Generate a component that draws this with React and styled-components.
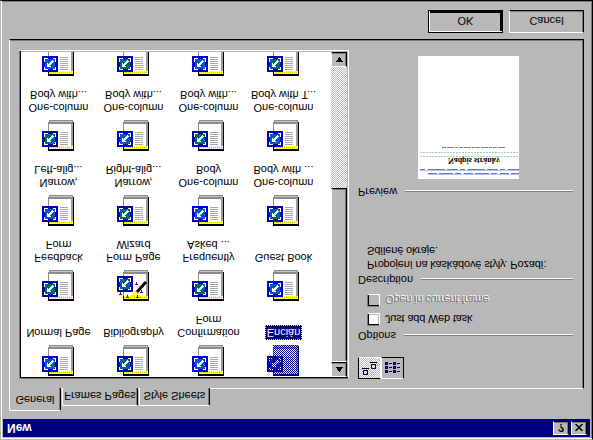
import React from "react";
import styled, { createGlobalStyle } from "styled-components";

const face = "#b8b8b8";
const shade = "#7b7b7b";
const dither = `repeating-conic-gradient(${face} 0 25%, #fff 0 50%) 0 0 / 2px 2px`;

const GlobalStyle = createGlobalStyle`
  html, body {
    margin: 0;
    background: ${face};
    overflow: hidden;
  }
  body {
    font-family: "Liberation Sans", Arial, sans-serif;
    font-size: 11px;
    color: #000;
  }
`;

const templates = [
  ["Normal Page", "Bibliography", "Confirmation\nForm", "Encián"],
  ["Feedback\nForm", "Form Page\nWizard", "Frequently\nAsked ...", "Guest Book"],
  ["Narrow,\nLeft-alig...", "Narrow,\nRight-alig...", "One-column\nBody", "One-column\nBody with ..."],
  ["One-column\nBody with...", "One-column\nBody with...", "One-column\nBody with...", "One-column\nBody with T..."],
  ["", "", "", ""],
].flat();

// the reference is mirrored top to bottom, everything inside is laid out upright
const Dialog = styled.div`
  box-sizing: border-box;
  width: 593px;
  height: 440px;
  padding: 2px;
  background: ${face};
  border: 1px solid;
  border-color: ${face} #000 #000 ${face};
  box-shadow: inset 1px 1px 0 #fff, inset -1px -1px 0 ${shade};
  transform: scaleY(-1);
  display: flex;
  flex-direction: column;
`;

const TitleBar = styled.div`
  height: 18px;
  background: #000080;
  display: flex;
  align-items: center;
  padding: 0 3px 0 4px;
  gap: 2px;
`;

const TitleText = styled.div`
  flex: 1;
  color: #fff;
  font-weight: bold;
  font-size: 12px;
`;

const CaptionButton = styled.div`
  box-sizing: border-box;
  width: 16px;
  height: 14px;
  background: ${face};
  border: 1px solid;
  border-color: #fff #000 #000 #fff;
  box-shadow: inset -1px -1px 0 ${shade};
  display: flex;
  align-items: center;
  justify-content: center;
  font-weight: bold;
  font-size: 11px;
  line-height: 1;
`;

const Content = styled.div`
  flex: 1;
  padding: 8px 6px 0;
  display: flex;
  flex-direction: column;
`;

const TabStrip = styled.div`
  display: flex;
  align-items: flex-end;
  height: 23px;
  margin-bottom: -1px;
  position: relative;
  z-index: 1;
`;

const Tab = styled.div`
  box-sizing: border-box;
  width: ${(p) => p.$width}px;
  height: ${(p) => (p.$active ? 23 : 18)}px;
  margin-right: 1px;
  padding-bottom: ${(p) => (p.$active ? 2 : 0)}px;
  background: ${face};
  border: solid;
  border-width: 1px 1px 0 1px;
  border-color: #fff #000 #fff #fff;
  border-radius: 2px 2px 0 0;
  box-shadow: inset -1px 0 0 ${shade};
  display: flex;
  align-items: center;
  justify-content: center;
`;

const TabPanel = styled.div`
  box-sizing: border-box;
  height: 350px;
  padding: 9px 9px 0;
  background: ${face};
  border: 1px solid;
  border-color: #fff #000 #000 #fff;
  box-shadow: inset -1px -1px 0 ${shade};
  display: flex;
  gap: 9px;
`;

const ListBox = styled.div`
  box-sizing: border-box;
  width: 330px;
  height: 329px;
  background: #fff;
  border: 1px solid;
  border-color: ${shade} #fff #fff ${shade};
  box-shadow: inset 1px 1px 0 #000, inset -1px -1px 0 ${face};
  padding: 2px 1px 1px 1px;
  display: flex;
`;

const ItemGrid = styled.div`
  flex: 1;
  overflow: hidden;
  display: grid;
  grid-template-columns: repeat(4, 75px);
  grid-auto-rows: 75px;
`;

const Item = styled.div`
  display: flex;
  flex-direction: column;
  align-items: center;
  gap: 5px;

  svg {
    margin-right: 1px;
  }
`;

const ItemLabel = styled.div`
  white-space: pre-line;
  text-align: center;
  line-height: 13px;
  ${(p) =>
    p.$selected &&
    `
    background: #000080;
    color: #fff;
    box-shadow: 0 0 0 1px #000;
    outline: 1px dotted #ffff00;
    padding: 0 1px;
  `}
`;

const ScrollBar = styled.div`
  flex: none;
  width: 16px;
  margin-top: -1px;
  display: flex;
  flex-direction: column;
`;

const ScrollButton = styled.div`
  box-sizing: border-box;
  height: 15px;
  flex: none;
  background: ${face};
  border: 1px solid;
  border-color: #fff #000 #000 #fff;
  box-shadow: inset -1px -1px 0 ${shade};
  display: flex;
  align-items: center;
  justify-content: center;
`;

const ScrollThumb = styled.div`
  box-sizing: border-box;
  height: 174px;
  flex: none;
  background: ${face};
  border: 1px solid;
  border-color: #fff #000 #000 #fff;
  box-shadow: inset 1px 1px 0 ${face}, inset -1px -1px 0 ${shade};
`;

const ScrollTrack = styled.div`
  flex: 1;
  background: ${dither};
`;

const SidePane = styled.div`
  width: 215px;
  display: flex;
  flex-direction: column;
`;

const ViewToggle = styled.div`
  display: flex;
  height: 22px;
  margin-bottom: 15px;
`;

const ViewButton = styled.div`
  box-sizing: border-box;
  width: 23px;
  height: 22px;
  border: 1px solid;
  border-color: ${(p) => (p.$pressed ? "#000 #fff #fff #000" : "#fff #000 #000 #fff")};
  background: ${(p) => (p.$pressed ? dither : face)};
  display: flex;
  align-items: center;
  justify-content: center;
`;

const SectionHead = styled.div`
  display: flex;
  align-items: center;
  gap: 8px;
  height: 13px;
  line-height: 13px;
  margin-top: ${(p) => p.$top || 0}px;
  &::after {
    content: "";
    flex: 1;
    height: 1px;
    background: ${shade};
    border-bottom: 1px solid #fff;
  }
`;

const CheckRow = styled.div`
  display: flex;
  align-items: center;
  gap: 5px;
  height: 13px;
  margin-left: 9px;
  margin-top: ${(p) => p.$top}px;
  letter-spacing: -0.17px;
  ${(p) => p.$disabled && `color: ${shade}; text-shadow: 1px 1px 0 #fff;`}
`;

const CheckBox = styled.div`
  box-sizing: border-box;
  width: 13px;
  height: 13px;
  background: ${(p) => (p.$disabled ? face : "#fff")};
  border: 1px solid;
  border-color: ${shade} #fff #fff ${shade};
  box-shadow: inset 1px 1px 0 #000, inset -1px -1px 0 ${face};
`;

const Description = styled.div`
  margin: 1px 0 0 9px;
  line-height: 14px;
  height: 43px;
  letter-spacing: -0.17px;
`;

const PreviewPic = styled.div`
  width: 101px;
  height: 123px;
  margin: 6px 0 0 60px;
  background: #fff;
`;

const ButtonRow = styled.div`
  display: flex;
  justify-content: flex-end;
  gap: 6px;
  margin-top: 6px;
`;

const DialogButton = styled.div`
  box-sizing: border-box;
  width: 75px;
  height: 23px;
  background: ${face};
  display: flex;
  align-items: center;
  justify-content: center;
  border: 1px solid;
  border-color: #fff #000 #000 #fff;
  box-shadow: inset -1px -1px 0 ${shade};
  ${(p) =>
    p.$default &&
    `
    border-color: #000;
    box-shadow: inset 1px 1px 0 #fff, inset -2px -2px 0 #000;
  `}
`;

const Patterns = () => (
  <defs>
    <pattern id="blueCheck" width="2" height="2" patternUnits="userSpaceOnUse">
      <rect width="2" height="2" fill="#0000e0" />
      <rect width="1" height="1" fill="#0000a0" />
      <rect x="1" y="1" width="1" height="1" fill="#0000a0" />
    </pattern>
    <pattern id="tealCheck" width="2" height="2" patternUnits="userSpaceOnUse">
      <rect width="2" height="2" fill="#0040c0" />
      <rect width="1" height="1" fill="#008080" />
      <rect x="1" y="1" width="1" height="1" fill="#008080" />
    </pattern>
    <pattern id="yellowCheck" width="2" height="2" patternUnits="userSpaceOnUse">
      <rect width="2" height="2" fill="#ffff00" />
      <rect width="1" height="1" fill="#fff" />
      <rect x="1" y="1" width="1" height="1" fill="#d8d800" />
    </pattern>
    <pattern id="navyCheck" width="2" height="2" patternUnits="userSpaceOnUse">
      <rect width="1" height="1" fill="#000080" />
      <rect x="1" y="1" width="1" height="1" fill="#000080" />
    </pattern>
  </defs>
);

const TextLines = () =>
  [6, 8, 10, 12, 14, 16, 18].map((y) => <rect key={y} x="18" y={y} width="8" height="1" fill="#a8a8a8" />);

const ShortcutSquare = ({ lift = 0 }) => (
  <g transform={`translate(0 ${lift})`}>
    <rect x="0" y="4" width="16" height="16" fill="url(#blueCheck)" />
    <rect x="3" y="7" width="10" height="10" fill="url(#tealCheck)" />
    <path d="M2.5 9.5v-3h3M10.5 6.5h3v3M13.5 14.5v3h-3M5.5 17.5h-3v-3" stroke="#fff" fill="none" />
    <path d="M11 15L5.5 9.5M5.5 13V9.5H9" stroke="#fff" strokeWidth="1.6" fill="none" />
  </g>
);

const PageIcon = ({ wizard, selected }) => (
  <svg width="32" height="32" viewBox="0 0 32 32" shapeRendering="crispEdges">
    <Patterns />
    <rect x="7" y="27" width="24" height="4" fill="#8c8c8c" />
    <rect x="8" y="29" width="22" height="1" fill="#c4c4c4" />
    <rect x="29" y="2" width="2" height="26" fill="#9c9c9c" />
    <rect x="6" y="2" width="23" height="25" fill="#fff" />
    <rect x="6" y="5" width="1" height="24" fill="#8c8c8c" />
    <rect x="31" y="0" width="1" height="29" fill="#000" />
    <rect x="7" y="2" width="24" height="3" fill="url(#yellowCheck)" />
    <rect x="6" y="0" width="25" height="2" fill="#000" />
    <rect x="6" y="1" width="1" height="4" fill="#000" />
    {!wizard && <TextLines />}
    <ShortcutSquare lift={wizard ? 5 : 0} />
    {wizard && (
      <g>
        <path d="M19 8L29 19" stroke="#000" strokeWidth="3" shapeRendering="auto" />
        <path d="M15 4L20 9" stroke="#ffff00" strokeWidth="3" shapeRendering="auto" />
        {[[3, 7], [19, 17], [24, 9], [10, 4], [20, 4]].map(([x, y]) => (
          <path key={`${x}-${y}`} d={`M${x - 1} ${y}h3M${x} ${y - 1}v3`} stroke="#800080" />
        ))}
      </g>
    )}
    {selected && (
      <>
        <rect x="6" y="0" width="26" height="31" fill="url(#navyCheck)" />
        <rect x="0" y="4" width="16" height="16" fill="url(#navyCheck)" />
      </>
    )}
  </svg>
);

const Arrow = ({ down }) => (
  <svg width="9" height="5" viewBox="0 0 9 5" shapeRendering="crispEdges">
    <path d={down ? "M1 0h7L4.5 5z" : "M4.5 0L8.5 5h-8z"} fill="#000" />
  </svg>
);

const LargeIconsGlyph = () => (
  <svg width="15" height="14" viewBox="0 0 15 14" shapeRendering="crispEdges">
    <path d="M1 0h5v5h-5zM2 1v3h3v-3z" fill="#000080" fillRule="evenodd" />
    <rect x="0" y="6" width="7" height="1" fill="#000" />
    <path d="M9 6h5v5h-5zM10 7v3h3v-3z" fill="#000080" fillRule="evenodd" />
    <rect x="8" y="12" width="7" height="1" fill="#000" />
  </svg>
);

const ListGlyph = () => (
  <svg width="16" height="13" viewBox="0 0 16 13" shapeRendering="crispEdges">
    {[1, 5, 9].map((y) =>
      [0, 8].map((x) => (
        <g key={`${x}-${y}`}>
          <rect x={x} y={y} width="3" height="3" fill="#000080" />
          <rect x={x + 4} y={y + 1} width="3" height="1" fill="#000080" />
        </g>
      ))
    )}
  </svg>
);

const PreviewThumb = () => (
  <svg width="101" height="123" viewBox="0 0 101 123" shapeRendering="crispEdges">
    <rect x="10" y="4" width="91" height="1" fill="#a9c9ea" />
    <path d="M10 5.5H101" stroke="#6f7f98" strokeDasharray="9 2 14 2 6 3" />
    <rect x="2" y="8" width="99" height="1" fill="#a9c9ea" />
    <path d="M2 9.5H101" stroke="#6f7f98" strokeDasharray="5 3 17 2 11 2" />
    <text x="56" y="21" fontFamily="Liberation Serif, serif" fontSize="8" fontWeight="bold" textAnchor="middle">
      Nadpis stránky
    </text>
    <path d="M2 22.5H101M2 26.5H101" stroke="#a8d0a8" strokeDasharray="2 1" />
    <path d="M24 31.5H87" stroke="#808080" strokeDasharray="4 1 7 1 3 1" />
  </svg>
);

const App = () => (
  <>
    <GlobalStyle />
    <Dialog>
      <TitleBar>
        <TitleText>New</TitleText>
        <CaptionButton>?</CaptionButton>
        <CaptionButton>
          <svg width="8" height="7" viewBox="0 0 8 7">
            <path d="M0.5 0L7.5 7M7.5 0L0.5 7" stroke="#000" strokeWidth="1.5" />
          </svg>
        </CaptionButton>
      </TitleBar>
      <Content>
        <TabStrip>
          <Tab $active $width={52}>General</Tab>
          <Tab $width={76}>Frames Pages</Tab>
          <Tab $width={71}>Style Sheets</Tab>
        </TabStrip>
        <TabPanel>
          <ListBox>
            <ItemGrid>
              {templates.map((name, i) => (
                <Item key={i}>
                  <PageIcon wizard={name.startsWith("Form Page")} selected={name === "Encián"} />
                  {name && <ItemLabel $selected={name === "Encián"}>{name}</ItemLabel>}
                </Item>
              ))}
            </ItemGrid>
            <ScrollBar>
              <ScrollButton><Arrow /></ScrollButton>
              <ScrollThumb />
              <ScrollTrack />
              <ScrollButton><Arrow down /></ScrollButton>
            </ScrollBar>
          </ListBox>
          <SidePane>
            <ViewToggle>
              <ViewButton $pressed><LargeIconsGlyph /></ViewButton>
              <ViewButton><ListGlyph /></ViewButton>
            </ViewToggle>
            <SectionHead>Options</SectionHead>
            <CheckRow $top={3}>
              <CheckBox />
              Just add Web task
            </CheckRow>
            <CheckRow $top={6} $disabled>
              <CheckBox $disabled />
              Open in current frame
            </CheckRow>
            <SectionHead $top={8}>Description</SectionHead>
            <Description>
              Propojení na kaskádové styly. Pozadí:
              <br />
              Sdílené okraje.
            </Description>
            <SectionHead $top={31}>Preview</SectionHead>
            <PreviewPic><PreviewThumb /></PreviewPic>
          </SidePane>
        </TabPanel>
        <ButtonRow>
          <DialogButton $default>OK</DialogButton>
          <DialogButton>Cancel</DialogButton>
        </ButtonRow>
      </Content>
    </Dialog>
  </>
);

export default App;
